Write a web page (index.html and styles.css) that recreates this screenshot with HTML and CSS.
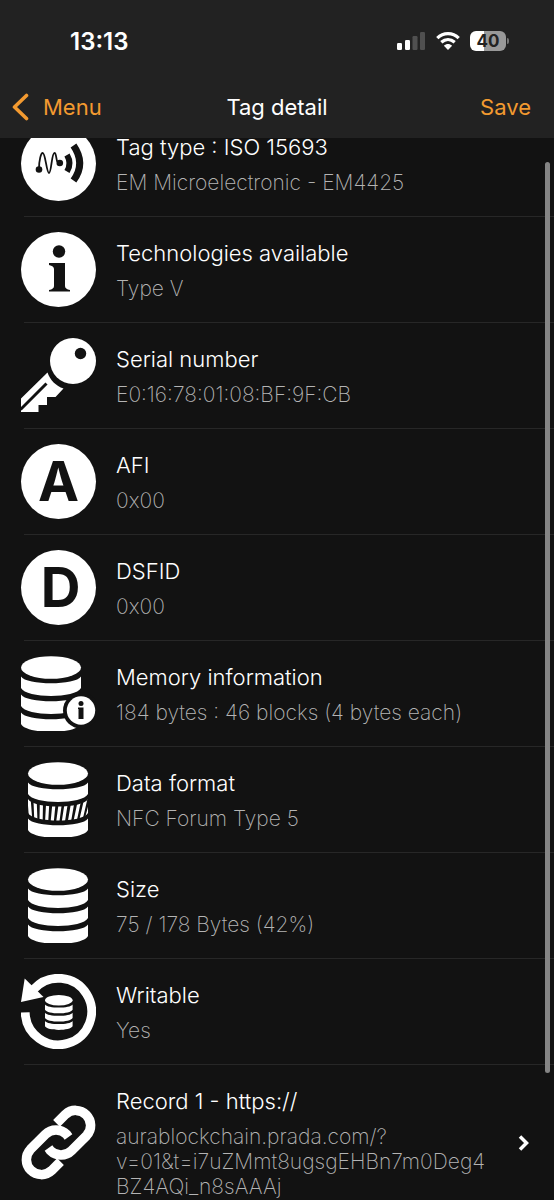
FILE: index.html
```html
<!DOCTYPE html>
<html lang="en">
<head>
<meta charset="utf-8">
<meta name="viewport" content="width=device-width, initial-scale=1">
<title>Tag detail</title>
<link rel="stylesheet" href="styles.css">
</head>
<body>
<svg class="defs" aria-hidden="true">
  <defs>
    <g id="disc"><ellipse cx="30" cy="11.5" rx="30" ry="11.3"/></g>
    <path id="band" d="M0 20.5C5 29.5 55 29.5 60 20.5V32C55 42.500 5 42.500 0 32Z"/>
    <g id="database">
      <use href="#disc"/>
      <use href="#band"/>
      <use href="#band" y="18"/>
      <use href="#band" y="36"/>
    </g>
    <clipPath id="middle-band"><path d="M0 37C5 47 55 47 60 37V51C55 61 5 61 0 51Z"/></clipPath>
  </defs>
</svg>
<div class="app">
  <header class="header">
    <div class="status">
      <time class="clock">13:13</time>
      <div class="indicators">
        <svg width="29" height="18" viewBox="0 0 29 18" role="img" aria-label="Signal">
          <rect x="0" y="11" width="5" height="7" rx="1.200" fill="#fff"/>
          <rect x="8" y="8" width="5" height="10" rx="1.200" fill="#fff"/>
          <rect x="15.500" y="4" width="5" height="14" rx="1.200" fill="#505050"/>
          <rect x="23" y="0" width="5" height="18" rx="1.200" fill="#505050"/>
        </svg>
        <svg width="24" height="18" viewBox="0 0 24 18" role="img" aria-label="Wi-Fi">
          <g fill="none" stroke="#fff" stroke-width="3.200">
            <path d="M1.300 6.200C7.300.1 16.700.1 22.700 6.200"/>
            <path d="M5.300 10.300C9.300 6.700 14.700 6.700 18.700 10.300"/>
          </g>
          <path d="M12 18L7.900 13.800C10.300 11.500 13.700 11.500 16.100 13.800Z" fill="#fff"/>
        </svg>
        <div class="battery"><span class="battery-level">40</span></div>
      </div>
    </div>
    <nav class="nav">
      <button class="nav-button back" type="button">
        <svg width="17" height="28" viewBox="0 0 17 28" aria-hidden="true"><path d="M14.500 2.500L2.500 14L14.500 25.500" fill="none" stroke="currentColor" stroke-width="3.600" stroke-linecap="round" stroke-linejoin="round"/></svg>
        <span>Menu</span>
      </button>
      <h1 class="title">Tag detail</h1>
      <button class="nav-button save" type="button">Save</button>
    </nav>
  </header>
  <main class="content">
    <ul class="list">
      <li class="row">
        <svg class="icon" viewBox="0 0 75 75" aria-hidden="true">
          <circle cx="37.500" cy="37.500" r="37.500" fill="#fff"/>
          <g fill="none" stroke="#121212">
            <path d="M18 43C18 34 20 27 21.700 27C24.500 27 25.500 47 28 47C30.500 47 30.500 27 33.500 27C36 27 34.500 38 38.500 37" stroke-width="1.800"/>
            <path d="M46 29Q51 37.500 46 45.500" stroke-width="6"/>
            <path d="M52.500 19.500Q65 37.500 52.500 54.500" stroke-width="7"/>
          </g>
          <g fill="#121212"><circle cx="18" cy="43.500" r="3.300"/><circle cx="38.800" cy="37" r="3.300"/></g>
        </svg>
        <div class="text"><h2 class="name">Tag type : ISO 15693</h2><p class="value">EM Microelectronic - EM4425</p></div>
      </li>
      <li class="row">
        <svg class="icon" viewBox="0 0 75 75" aria-hidden="true">
          <circle cx="37.500" cy="37.500" r="37.500" fill="#fff"/>
          <g fill="#121212"><circle cx="38" cy="19.500" r="6.200"/><path d="M28 31H44V54Q44 57 49 58V59.500H28V58Q33 57 33 54V37Q33 34 28 33Z"/></g>
        </svg>
        <div class="text"><h2 class="name">Technologies available</h2><p class="value">Type V</p></div>
      </li>
      <li class="row">
        <svg class="icon" viewBox="0 0 75 75" aria-hidden="true">
          <circle cx="52" cy="23" r="23" fill="#fff"/>
          <circle cx="59.500" cy="15.500" r="5.700" fill="#121212"/>
          <path d="M26.500 34.500C29 42 35 48 42.500 50.500L34.500 59H26V67H17.500V74H0V60.500Z" fill="#fff"/>
          <path d="M-.500 71.500L25.500 45.500" stroke="#121212" stroke-width="3"/>
        </svg>
        <div class="text"><h2 class="name">Serial number</h2><p class="value">E0:16:78:01:08:BF:9F:CB</p></div>
      </li>
      <li class="row">
        <span class="icon letter" aria-hidden="true">A</span>
        <div class="text"><h2 class="name">AFI</h2><p class="value">0x00</p></div>
      </li>
      <li class="row">
        <span class="icon letter letter-d" aria-hidden="true">D</span>
        <div class="text"><h2 class="name">DSFID</h2><p class="value">0x00</p></div>
      </li>
      <li class="row">
        <svg class="icon" viewBox="0 0 75 75" aria-hidden="true">
          <use href="#database" fill="#fff"/>
          <circle cx="60" cy="54.500" r="18" fill="#121212"/>
          <circle cx="60" cy="54.500" r="14.200" fill="#fff"/>
          <g fill="#121212"><circle cx="60" cy="47.500" r="2.500"/><path d="M57 51.500H62.500V63H57.500V53H57Z"/></g>
        </svg>
        <div class="text"><h2 class="name">Memory information</h2><p class="value">184 bytes : 46 blocks (4 bytes each)</p></div>
      </li>
      <li class="row">
        <svg class="icon" viewBox="-7 0 75 75" aria-hidden="true">
          <g fill="#fff"><use href="#disc"/><use href="#band"/><use href="#band" y="36"/></g>
          <g clip-path="url(#middle-band)">
            <path d="M1 36L3 62M7 36L8 62M13.500 36L13 62M20 36L18.500 62M26.500 36L24 62M33 36L29.500 62M39 36L35 62M45.500 36L41 62M52 36L46.500 62M58 36L52 62M64 36L57 62" stroke="#fff" stroke-width="3.200"/>
          </g>
        </svg>
        <div class="text"><h2 class="name">Data format</h2><p class="value">NFC Forum Type 5</p></div>
      </li>
      <li class="row">
        <svg class="icon" viewBox="-7 0 75 75" aria-hidden="true"><use href="#database" fill="#fff"/></svg>
        <div class="text"><h2 class="name">Size</h2><p class="value">75 / 178 Bytes (42%)</p></div>
      </li>
      <li class="row">
        <svg class="icon" viewBox="0 0 75 75" aria-hidden="true">
          <path d="M4.200 38.500A33.200 33.200 0 1 0 13 15" fill="none" stroke="#fff" stroke-width="8.800"/>
          <path d="M3.700 4.500L0 28L22.500 23Z" fill="#fff"/>
          <use href="#database" fill="#fff" transform="translate(24 21) scale(.46)"/>
        </svg>
        <div class="text"><h2 class="name">Writable</h2><p class="value">Yes</p></div>
      </li>
      <li>
        <a class="row" href="#record">
          <svg class="icon" viewBox="0 0 75 75" aria-hidden="true">
            <g fill="none" stroke="#fff" stroke-width="9.500">
              <path d="M35.500 18.300L44.400 9.400A15 15 0 0 1 65.600 30.600L50.600 45.600A15 15 0 0 1 29.400 45.600L27.500 43"/>
              <path d="M39.500 56.700L30.600 65.600A15 15 0 0 1 9.400 44.400L24.400 29.400A15 15 0 0 1 45.600 29.400L47.500 32"/>
            </g>
          </svg>
          <div class="text"><h2 class="name">Record 1 - https://</h2><p class="value">aurablockchain.prada.com/?<br>v=01&amp;t=i7uZMmt8ugsgEHBn7m0Deg4<br>BZ4AQi_n8sAAAj</p></div>
          <svg class="chevron" width="12" height="18" viewBox="0 0 12 18" aria-hidden="true"><path d="M2 2.500L8.500 9L2 15.500" fill="none" stroke="#fff" stroke-width="3.500"/></svg>
        </a>
      </li>
    </ul>
    <div class="scrollbar" aria-hidden="true"></div>
  </main>
</div>
</body>
</html>
```
FILE: styles.css
```css
* { box-sizing: border-box; }
body, h1, h2, p, ul { margin: 0; padding: 0; }
body {
  background: #121212;
  color: #fff;
  font-family: Inter, "Open Sans", sans-serif;
}
.defs { position: absolute; width: 0; height: 0; }
.app {
  display: flex;
  flex-direction: column;
  height: 100vh;
  overflow: hidden;
}
.header {
  flex: none;
  background: #222;
}
.status {
  display: flex;
  align-items: center;
  justify-content: space-between;
  height: 82px;
  padding: 0 48px 0 70px;
}
.clock { font-size: 24px; font-weight: 600; }
.indicators { display: flex; align-items: center; gap: 10px; }
.battery {
  position: relative;
  display: flex;
  align-items: center;
  justify-content: center;
  width: 36px;
  height: 20px;
  border-radius: 6px;
  background: linear-gradient(90deg, #fff 40%, #999 40%);
}
.battery::after {
  content: "";
  position: absolute;
  left: 37px;
  top: 7px;
  width: 2px;
  height: 6px;
  border-radius: 0 2px 2px 0;
  background: #777;
}
.battery-level { color: #222; font-size: 17px; font-weight: 700; line-height: 20px; }
.nav {
  display: grid;
  grid-template-columns: 1fr auto 1fr;
  align-items: center;
  height: 56px;
  padding: 0 12px 6px;
}
.nav-button {
  display: flex;
  align-items: center;
  gap: 14px;
  padding: 0;
  border: 0;
  background: none;
  color: #f39a30;
  font: 400 22px/30px Inter, "Open Sans", sans-serif;
  cursor: pointer;
}
.back { justify-self: start; }
.save { justify-self: end; margin-right: 11px; }
.title { font-size: 22px; line-height: 30px; font-weight: 400; }
.content { position: relative; flex: 1; min-height: 0; overflow: hidden; }
.list { margin-top: -27px; list-style: none; }
.row {
  position: relative;
  display: flex;
  align-items: center;
  gap: 20px;
  padding: 21px 24px 22px 21px;
  color: inherit;
  text-decoration: none;
}
.row::after {
  content: "";
  position: absolute;
  left: 24px;
  right: 0;
  bottom: 0;
  height: 1px;
  background: #272727;
}
.icon { flex: none; width: 75px; height: 75px; margin: -6px 0; }
.letter {
  border-radius: 50%;
  background: #fff;
  color: #121212;
  font-size: 55px;
  font-weight: 700;
  line-height: 75px;
  text-align: center;
}
.letter-d { padding-left: 4px; }
.text { flex: 1; min-width: 0; }
.name { margin-bottom: 8px; font-size: 22px; line-height: 30px; font-weight: 300; }
.value { color: #b4b4b4; font-size: 21px; line-height: 25px; font-weight: 200; white-space: nowrap; }
.chevron { flex: none; }
.scrollbar {
  position: absolute;
  top: 24px;
  right: 4px;
  bottom: 127px;
  width: 5px;
  border-radius: 3px;
  background: #858585;
}
```
